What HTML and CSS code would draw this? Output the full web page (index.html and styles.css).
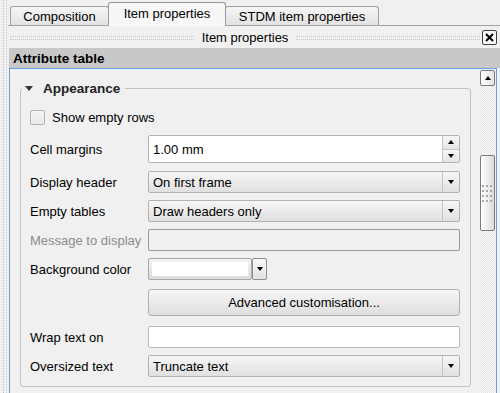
FILE: index.html
```html
<!DOCTYPE html>
<html lang="en">
<head>
    <meta charset="UTF-8">
    <meta name="viewport" content="width=device-width, initial-scale=1.0">
    <title>Item properties</title>
    <link rel="stylesheet" href="styles.css">
</head>
<body>
    <div class="app">
        <div class="grip-col"></div>
        <div class="main">
            <div class="tabbar">
                <div class="tab tab-comp">Composition</div>
                <div class="tab tab-item active">Item properties</div>
                <div class="tab tab-stdm">STDM item properties</div>
            </div>
            <div class="dock-title">
                <span class="dots"></span>
                <span class="dock-name">Item properties</span>
                <span class="dots"></span>
                <div class="close">
                    <svg width="9" height="9" viewBox="0 0 9 9"><path d="M1 1 L8 8 M8 1 L1 8" stroke="#000" stroke-width="2"/></svg>
                </div>
            </div>
            <div class="section-head">Attribute table</div>
            <div class="scroll-frame">
                <div class="scroll-content">
                    <div class="group">
                        <div class="group-title"><span class="tri-down"></span>Appearance</div>
                        <div class="rows">
                            <div class="row row-check">
                                <span class="checkbox"></span>
                                <span>Show empty rows</span>
                            </div>
                            <div class="row row-spin">
                                <span class="label">Cell margins</span>
                                <div class="spin">
                                    <span class="spin-text">1.00 mm</span>
                                    <div class="spin-btns">
                                        <span class="spin-up"><i class="arr-up"></i></span>
                                        <span class="spin-down"><i class="arr-down"></i></span>
                                    </div>
                                </div>
                            </div>
                            <div class="row row-gap1">
                                <span class="label">Display header</span>
                                <div class="combo"><span class="combo-text">On first frame</span><span class="combo-btn"><i class="arr-down"></i></span></div>
                            </div>
                            <div class="row">
                                <span class="label">Empty tables</span>
                                <div class="combo"><span class="combo-text">Draw headers only</span><span class="combo-btn"><i class="arr-down"></i></span></div>
                            </div>
                            <div class="row">
                                <span class="label disabled">Message to display</span>
                                <div class="line-edit off"></div>
                            </div>
                            <div class="row">
                                <span class="label">Background color</span>
                                <div class="color-pick">
                                    <span class="color-btn"><span class="swatch"></span></span>
                                    <span class="color-arrow"><i class="arr-down"></i></span>
                                </div>
                            </div>
                            <div class="row row-adv">
                                <span class="label"></span>
                                <div class="button">Advanced customisation...</div>
                            </div>
                            <div class="row row-wrap">
                                <span class="label">Wrap text on</span>
                                <div class="line-edit"></div>
                            </div>
                            <div class="row">
                                <span class="label">Oversized text</span>
                                <div class="combo"><span class="combo-text">Truncate text</span><span class="combo-btn"><i class="arr-down"></i></span></div>
                            </div>
                        </div>
                    </div>
                </div>
                <div class="scrollbar">
                    <div class="sb-btn"><i class="arr-up"></i></div>
                    <div class="sb-track"></div>
                    <div class="sb-thumb">
                        <svg width="11" height="17" viewBox="0 0 11 17">
                            <g fill="#a8a8a8">
                                <rect x="0" y="0" width="2" height="2"/><rect x="4" y="0" width="2" height="2"/><rect x="8" y="0" width="2" height="2"/>
                                <rect x="0" y="5" width="2" height="2"/><rect x="4" y="5" width="2" height="2"/><rect x="8" y="5" width="2" height="2"/>
                                <rect x="0" y="10" width="2" height="2"/><rect x="4" y="10" width="2" height="2"/><rect x="8" y="10" width="2" height="2"/>
                                <rect x="0" y="15" width="2" height="2"/><rect x="4" y="15" width="2" height="2"/><rect x="8" y="15" width="2" height="2"/>
                            </g>
                        </svg>
                    </div>
                    <div class="sb-track sb-rest"></div>
                </div>
            </div>
        </div>
    </div>
</body>
</html>
```
FILE: styles.css
```css
body {
    margin: 0;
    background-color: #f0f0f0;
    font-family: "Liberation Sans", Arial, sans-serif;
    font-size: 13px;
    color: #000;
}
.app {
    display: flex;
    width: 500px;
    height: 393px;
    overflow: hidden;
}
.grip-col {
    width: 4px;
    margin-left: 3px;
    margin-right: 1px;
    border-left: 1px dotted #c2c2c2;
    border-right: 1px dotted #d2d2d2;
    box-sizing: border-box;
}
.main {
    flex: 1;
    display: flex;
    flex-direction: column;
    min-width: 0;
}

/* tabs */
.tabbar {
    flex: none;
    height: 26px;
    display: flex;
    align-items: flex-end;
    padding-left: 2px;
    border-bottom: 1px solid #a3a3a3;
    box-sizing: border-box;
}
.tab {
    height: 19px;
    box-sizing: border-box;
    border: 1px solid #a0a0a0;
    border-bottom: none;
    border-radius: 3px 3px 0 0;
    background: linear-gradient(#f6f6f6, #e2e2e2);
    display: flex;
    align-items: center;
    justify-content: center;
    padding-top: 1px;
}
.tab-comp { width: 99px; }
.tab-item {
    width: 118px;
    margin-left: -1px;
}
.tab-stdm {
    width: 154px;
    margin-left: -1px;
}
.tab.active {
    height: 24px;
    margin-bottom: -1px;
    background: #f7f7f7;
    border-color: #999;
    position: relative;
    z-index: 1;
    padding-top: 0;
    padding-bottom: 3px;
}

/* dock title */
.dock-title {
    flex: none;
    height: 22px;
    display: flex;
    align-items: center;
    padding-left: 2px;
    padding-right: 3px;
    gap: 8px;
}
.dots {
    flex: 1;
    height: 2px;
    border-top: 1px dotted #cacaca;
    border-bottom: 1px dotted #cacaca;
    margin-top: 1px;
}
.dock-name {
    padding-top: 1px;
}
.close {
    width: 13px;
    height: 13px;
    border: 1px solid #404040;
    border-radius: 2px;
    background: #f8f8f8;
    display: flex;
    align-items: center;
    justify-content: center;
    margin-left: -6px;
}

.section-head {
    flex: none;
    height: 20px;
    margin-left: 1px;
    background-color: #c8c8c8;
    font-weight: bold;
    font-size: 13.5px;
    padding-left: 4px;
    display: flex;
    align-items: center;
}

/* scroll area */
.scroll-frame {
    flex: 1;
    min-height: 0;
    margin-left: 1px;
    margin-right: 3px;
    border: 1px solid #6b9fe4;
    border-bottom: none;
    display: flex;
}
.scroll-content {
    flex: 1;
    padding-top: 19px;
}
.group {
    margin-left: 10px;
    margin-right: 9px;
    border: 1px solid #c3c3c3;
    border-radius: 3px;
    padding: 0 10px 9px 9px;
}
.group-title {
    display: flex;
    width: fit-content;
    align-items: center;
    height: 16px;
    margin-top: -9px;
    margin-left: -8px;
    padding: 0 5px 0 3px;
    background-color: #f0f0f0;
    font-weight: bold;
    font-size: 13.5px;
    color: #222;
}
.tri-down {
    width: 0;
    height: 0;
    border-left: 4.5px solid transparent;
    border-right: 4.5px solid transparent;
    border-top: 5px solid #333;
    margin-right: 10px;
    margin-top: 1px;
}
.rows {
    display: flex;
    flex-direction: column;
    gap: 7px;
    margin-top: 13px;
}
.row {
    display: flex;
    align-items: center;
    height: 22px;
}
.row-check {
    height: 16px;
    gap: 7px;
}
.row-spin {
    height: 28px;
    margin-top: 3px;
}
.row-gap1 { margin-top: 1px; }
.row-adv {
    height: 27px;
    margin-top: 2px;
}
.row-wrap { margin-top: 3px; }
.label {
    width: 118px;
    flex: none;
}
.label.disabled { color: #8c8c8c; }

.checkbox {
    width: 15px;
    height: 15px;
    box-sizing: border-box;
    border: 1px solid #b4b4b4;
    border-radius: 2px;
    background: linear-gradient(#f4f4f4, #e8e8e8);
}

/* controls */
.spin, .combo, .line-edit, .button {
    flex: 1;
    height: 100%;
    box-sizing: border-box;
    border: 1px solid #b2b2b2;
    border-radius: 2px;
}
.spin {
    display: flex;
    background: #fff;
}
.spin-text {
    flex: 1;
    padding-left: 4px;
    display: flex;
    align-items: center;
}
.spin-btns {
    width: 16px;
    display: flex;
    flex-direction: column;
    border-left: 1px solid #c6c6c6;
}
.spin-up, .spin-down {
    flex: 1;
    display: flex;
    align-items: center;
    justify-content: center;
    background: linear-gradient(#f6f6f6, #e4e4e4);
}
.spin-up { border-bottom: 1px solid #c6c6c6; }
.combo {
    display: flex;
    background: linear-gradient(#f6f6f6, #e0e0e0);
}
.combo-text {
    flex: 1;
    padding-left: 4px;
    display: flex;
    align-items: center;
}
.combo-btn {
    width: 16px;
    border-left: 1px solid #c4c4c4;
    display: flex;
    align-items: center;
    justify-content: center;
}
.arr-down, .arr-up {
    width: 0;
    height: 0;
    border-left: 3.5px solid transparent;
    border-right: 3.5px solid transparent;
}
.arr-down { border-top: 4px solid #000; }
.arr-up { border-bottom: 4px solid #000; }

.line-edit {
    background: #fff;
    border-color: #bcbcbc;
}
.line-edit.off {
    background: #f0f0f0;
    border-color: #9a9a9a;
}
.color-pick {
    display: flex;
    height: 100%;
}
.color-btn {
    width: 104px;
    box-sizing: border-box;
    border: 1px solid #a8a8a8;
    border-radius: 2px;
    background: linear-gradient(#f4f4f4, #dcdcdc);
    padding: 3px;
    display: flex;
}
.swatch {
    flex: 1;
    background: #fff;
    border-radius: 1px;
}
.color-arrow {
    width: 15px;
    box-sizing: border-box;
    border: 1px solid #8e8e8e;
    border-radius: 2px;
    background: linear-gradient(#f8f8f8, #e2e2e2);
    display: flex;
    align-items: center;
    justify-content: center;
}
.button {
    background: linear-gradient(#f6f6f6, #dedede);
    display: flex;
    align-items: center;
    justify-content: center;
    border-radius: 3px;
    padding-bottom: 1px;
}

/* scrollbar */
.scrollbar {
    width: 15px;
    margin-right: 1px;
    padding-top: 1px;
    display: flex;
    flex-direction: column;
}
.sb-btn {
    flex: none;
    height: 16px;
    box-sizing: border-box;
    border: 1px solid #7c7c7c;
    border-radius: 2px;
    background: linear-gradient(90deg, #ffffff, #e4e4e4);
    display: flex;
    align-items: center;
    justify-content: center;
}
.sb-track {
    flex: none;
    height: 69px;
    background: repeating-conic-gradient(#fbfbfb 0 25%, #e4e4e4 0 50%) 0 0 / 2px 2px;
}
.sb-rest { flex: 1; }
.sb-thumb {
    flex: none;
    height: 76px;
    box-sizing: border-box;
    border: 1px solid #7c7c7c;
    border-radius: 2px;
    background: linear-gradient(90deg, #ffffff, #dcdcdc);
    display: flex;
    align-items: center;
    justify-content: center;
}
```
